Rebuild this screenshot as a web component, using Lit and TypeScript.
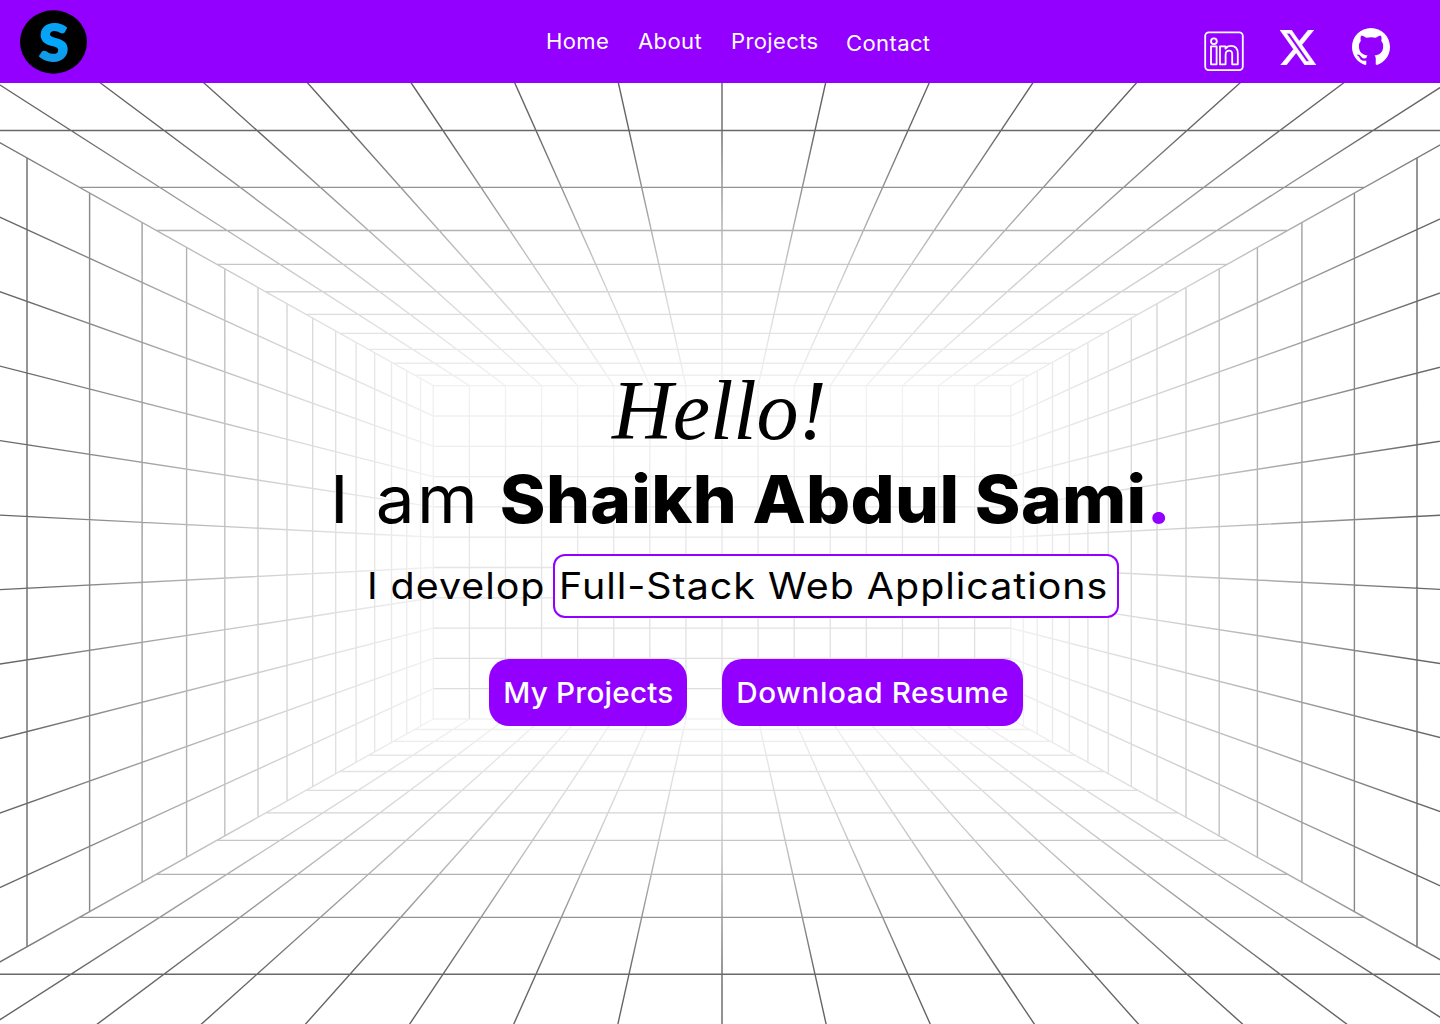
import { LitElement, html, svg, css } from "lit";
import { customElement } from "lit/decorators.js";

const range = (n: number) => Array.from({ length: n }, (_, i) => i);

/* Back wall of the room and how quickly its cells grow towards the viewer. */
const L = 433.3, R = 1010.7, T = 385.7, B = 719;
const COLS = 16, ROWS = 11;
const CW = (R - L) / COLS, CH = (B - T) / ROWS;
const GX = 0.223, GY = 0.10196;
const DIAG = (GX * COLS) / 2;

const TOP_Y = [130.5, 187.4, 230.5, 264.4, 291.8, 314.4, 333.4, 349.4, 363.3, 375.3];
const BOTTOM_Y = [729.5, 741.4, 755.3, 771.5, 790.4, 812.9, 840.4, 874.4, 917.4, 974.2];
const SIDE_X = [27, 89.6, 142.1, 186.6, 224.8, 258, 287, 312.7, 335.7, 356.1, 374.7, 391.5, 406.7, 420.6];

@customElement("room-grid")
export class RoomGrid extends LitElement {
  static styles = css`
    :host { display: block; }
    svg { display: block; }
    .line { fill: none; stroke-width: 1.4; }
    .top { stroke: url(#gt); }
    .bottom { stroke: url(#gb); }
    .left { stroke: url(#gl); }
    .right { stroke: url(#gr); }
    .back { stroke: url(#gk); stroke-width: 1.3; }
    .edge { stroke: #f1f1f1; stroke-width: 1.4; fill: none; }
  `;
  render() {
    const fade = (id: string, x1: number, y1: number, x2: number, y2: number) => svg`
      <linearGradient id=${id} gradientUnits="userSpaceOnUse" x1=${x1} y1=${y1} x2=${x2} y2=${y2}>
        <stop offset="0" stop-color="#636363"/><stop offset="0.17" stop-color="#696969"/>
        <stop offset="0.35" stop-color="#949494"/><stop offset="0.49" stop-color="#b2b2b2"/>
        <stop offset="0.6" stop-color="#c6c6c6"/><stop offset="0.7" stop-color="#d6d6d6"/>
        <stop offset="0.85" stop-color="#e5e5e5"/><stop offset="1" stop-color="#f2f2f2"/>
      </linearGradient>`;
    const top = [
      ...range(COLS + 1).map((i) => {
        const k = i - COLS / 2, x = 722 + k * CW, far = 722 + k * (CW + GX * (T - 60));
        return `M${x} ${T}L${far} 60`;
      }),
      ...TOP_Y.map((y) => `M${L - (T - y) * DIAG} ${y}H${R + (T - y) * DIAG}v.01`),
    ].join("");
    const bottom = [
      ...range(COLS + 1).map((i) => {
        const k = i - COLS / 2, x = 722 + k * CW, far = 722 + k * (CW + GX * (1044 - B));
        return `M${x} ${B}L${far} 1044`;
      }),
      ...BOTTOM_Y.map((y) => `M${L - (y - B) * DIAG} ${y}H${R + (y - B) * DIAG}v.01`),
    ].join("");
    const side = (sign: number) => {
      const edge = sign < 0 ? L : R;
      return [
        ...range(ROWS - 1).map((i) => {
          const k = i + 1 - ROWS / 2, mid = (T + B) / 2;
          return `M${edge} ${mid + k * CH}L${edge + sign * 440} ${mid + k * (CH + GY * 440)}`;
        }),
        ...SIDE_X.map((x) => {
          const d = L - x, px = edge + sign * d;
          return `M${px} ${T - d / DIAG}V${B + d / DIAG}h.01`;
        }),
      ].join("");
    };
    const back = [
      ...range(COLS - 1).map((i) => `M${L + (i + 1) * CW} ${T}V${B}h.01`),
      ...range(ROWS - 1).map((i) => `M${L} ${T + (i + 1) * CH}H${R}v.01`),
    ].join("");
    return html`<svg width="1440" height="1024" viewBox="0 0 1440 1024" aria-hidden="true">
      <defs>
        ${fade("gt", 0, 83, 0, T)} ${fade("gb", 0, 1022, 0, B)}
        ${fade("gl", -55, 0, L, 0)} ${fade("gr", 1499, 0, R, 0)}
        <linearGradient id="gk" gradientUnits="userSpaceOnUse" x1="0" y1=${T} x2="0" y2=${B}>
          <stop offset="0" stop-color="#f2f2f2"/><stop offset="0.4" stop-color="#e8e8e8"/>
          <stop offset="1" stop-color="#dcdcdc"/>
        </linearGradient>
      </defs>
      <path class="line back" d=${back} />
      <path class="line left" d=${side(-1)} />
      <path class="line right" d=${side(1)} />
      <path class="line top" d=${top} />
      <path class="line bottom" d=${bottom} />
      <rect class="edge" x=${L} y=${T} width=${R - L} height=${B - T} />
    </svg>`;
  }
}

@customElement("site-header")
export class SiteHeader extends LitElement {
  static styles = css`
    :host { display: block; }
    .bar {
      box-sizing: border-box; height: 83px; background: #9300ff; color: #fff;
      display: grid; grid-template-columns: 526px 1fr auto; padding: 0 50px 0 20px;
      font-family: Inter, "Liberation Sans", sans-serif;
    }
    .logo { display: block; margin-top: 9.5px; }
    .s { font: 900 52px Lato, sans-serif; stroke: url(#sg); stroke-width: 1.8; }
    .nav { display: flex; padding-top: 27px; }
    .link {
      color: inherit; text-decoration: none; font-size: 20.8px; line-height: 30px; font-weight: 400;
      letter-spacing: 0.35px; white-space: nowrap; transform: scaleX(1.06); transform-origin: 0 0;
    }
    .home { width: 92px; }
    .about { width: 93px; }
    .projects { width: 115px; }
    .contact { padding-top: 2px; }
    .social { display: flex; align-items: flex-start; padding-top: 28px; }
    .in { margin: 3px 36px 0 0; }
    .x { margin: 2px 36px 0 0; }
    svg { display: block; }
  `;
  render() {
    return html`<header class="bar">
      <svg class="logo" width="67" height="64" viewBox="0 0 67 64">
        <defs><linearGradient id="sg" x1="0" y1="0" x2="0" y2="1">
          <stop offset="0" stop-color="#00a8ff"/><stop offset="0.3" stop-color="#0aa0f2"/>
          <stop offset="0.55" stop-color="#00a8ff"/><stop offset="0.75" stop-color="#119ae6"/>
          <stop offset="1" stop-color="#00a8ff"/></linearGradient></defs>
        <ellipse cx="33.5" cy="32" rx="33.5" ry="31.7" fill="#000"/>
        <text class="s" fill="url(#sg)" text-anchor="middle" transform="translate(33.7 51.1) scale(1.03 1)">S</text>
      </svg>
      <nav class="nav">
        <a class="link home">Home</a>
        <a class="link about">About</a>
        <a class="link projects">Projects</a>
        <a class="link contact">Contact</a>
      </nav>
      <div class="social">
        <svg class="in" width="40" height="41" viewBox="0 0 40 41" fill="none" stroke="#fff" stroke-width="1.8" stroke-linejoin="round">
          <rect x="1.2" y="1.3" width="37.6" height="37.8" rx="3.6"/>
          <circle cx="9.9" cy="10.3" r="2.9"/>
          <rect x="7" y="15.3" width="5.6" height="18"/>
          <path d="M16 15.3h5.5v2.4c1.2-1.9 3.1-2.9 5.6-2.9 4.6 0 6.7 2.9 6.7 7.8v10.7h-5.6v-9.7c0-2.5-.8-3.9-2.9-3.9-2.4 0-3.7 1.6-3.7 4.2v9.4H16z"/>
        </svg>
        <svg class="x" width="36" height="35" viewBox="1.25 2.25 21.58 19.5" preserveAspectRatio="none" fill="#fff" stroke="#fff" stroke-width="0.35">
          <path d="M18.244 2.25h3.308l-7.227 8.26 8.502 11.24H16.17l-5.214-6.817L4.99 21.75H1.68l7.73-8.835L1.254 2.25H8.08l4.713 6.231zm-1.161 17.52h1.833L7.084 4.126H5.117z"/>
        </svg>
        <svg width="38" height="38" viewBox="0 0 16 16" fill="#fff">
          <path d="M8 0C3.58 0 0 3.58 0 8c0 3.54 2.29 6.53 5.47 7.59.4.07.55-.17.55-.38 0-.19-.01-.82-.01-1.49-2.01.37-2.53-.49-2.69-.94-.09-.23-.48-.94-.82-1.13-.28-.15-.68-.52-.01-.53.63-.01 1.08.58 1.23.82.72 1.21 1.87.87 2.33.66.07-.52.28-.87.51-1.07-1.78-.2-3.64-.89-3.64-3.95 0-.87.31-1.59.82-2.15-.08-.2-.36-1.02.08-2.12 0 0 .67-.21 2.2.82.64-.18 1.32-.27 2-.27s1.36.09 2 .27c1.53-1.04 2.2-.82 2.2-.82.44 1.1.16 1.92.08 2.12.51.56.82 1.27.82 2.15 0 3.07-1.87 3.75-3.65 3.95.29.25.54.73.54 1.48 0 1.07-.01 1.93-.01 2.2 0 .21.15.46.55.38A8.01 8.01 0 0 0 16 8c0-4.42-3.58-8-8-8z"/>
        </svg>
      </div>
    </header>`;
  }
}

@customElement("app-root")
export class AppRoot extends LitElement {
  static styles = css`
    :host {
      display: block; position: relative; width: 1440px; height: 1024px; overflow: hidden;
      background: #fff; color: #000; font-family: Inter, "Liberation Sans", sans-serif;
    }
    .backdrop { position: absolute; inset: 0; }
    .page { position: relative; display: flex; flex-direction: column; }
    .hero { display: flex; flex-direction: column; align-items: flex-start; white-space: nowrap; }
    .hello { margin: 278px 0 0 612px; font: italic 400 84px/100px "Liberation Serif", serif; }
    .name {
      margin: -6px 0 0 330px; font-size: 66px; line-height: 89px; height: 90px; font-weight: 400;
      letter-spacing: 2.2px; word-spacing: 3px; transform: scaleX(1.05); transform-origin: 0 0;
    }
    .bold { font-weight: 800; letter-spacing: 0.3px; word-spacing: 0; margin-left: -5px; }
    .dot { color: #9300ff; }
    .work { display: flex; align-items: center; margin: 9px 0 0 367px; height: 64px; font-size: 36.5px; line-height: 60px; letter-spacing: 0.9px; }
    .develop { width: 186px; }
    .boxed { box-sizing: border-box; width: 566px; height: 64px; border: 2px solid #9300ff; border-radius: 12px; background: #fff; padding-left: 4px; }
    .wide { display: inline-block; transform: scaleX(1.08); transform-origin: 0 0; }
    .actions { display: flex; gap: 35px; margin: 41px 0 0 489px; }
    .btn { font: 500 28px/69px Inter, sans-serif; color: #fff; background: #9300ff; border: 0; border-radius: 20px; height: 67px; padding: 0; }
    .label { display: inline-block; transform: scaleX(1.06); }
    .one { width: 198px; letter-spacing: 0.2px; }
    .two { width: 301px; letter-spacing: 0.55px; }
  `;
  render() {
    return html`<room-grid class="backdrop"></room-grid>
      <div class="page">
        <site-header></site-header>
        <main class="hero">
          <div class="hello">Hello!</div>
          <div class="name">I am <span class="bold">Shaikh Abdul Sami<span class="dot">.</span></span></div>
          <div class="work">
            <span class="develop"><span class="wide">I develop</span></span>
            <span class="boxed"><span class="wide">Full-Stack Web Applications</span></span>
          </div>
          <div class="actions">
            <button class="btn one"><span class="label">My Projects</span></button>
            <button class="btn two"><span class="label">Download Resume</span></button>
          </div>
        </main>
      </div>`;
  }
}
